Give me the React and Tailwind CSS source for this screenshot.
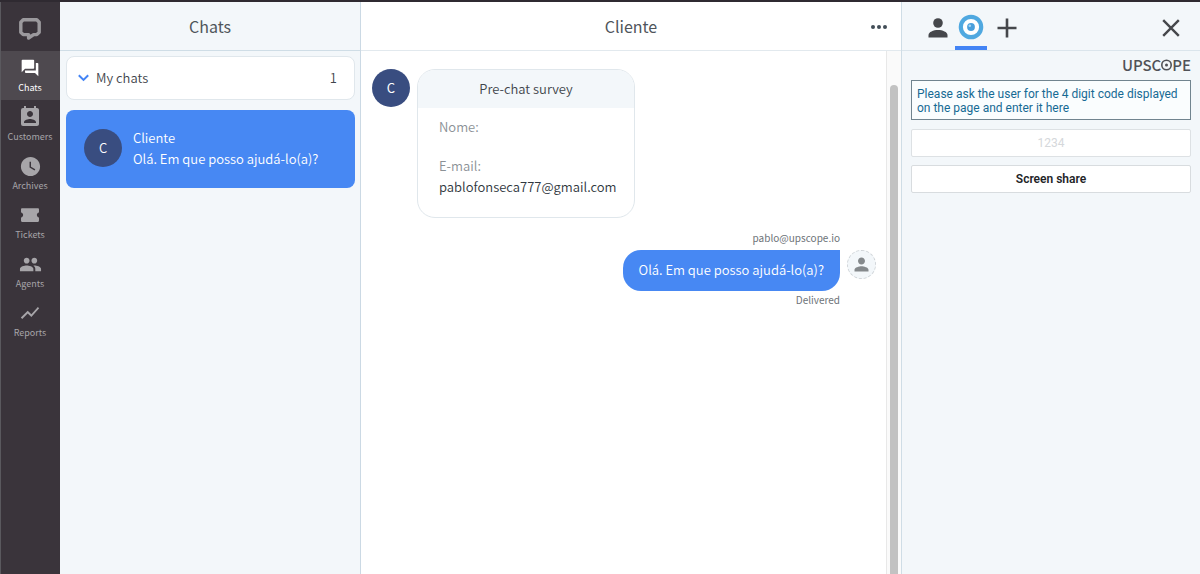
import React from "react";
import {
  MdQuestionAnswer,
  MdPermContactCalendar,
  MdWatchLater,
  MdPeople,
  MdShowChart,
  MdPerson,
} from "react-icons/md";

function LogoIcon() {
  return (
    <svg width="24" height="24" viewBox="0 0 24 24" fill="none" stroke="currentColor" strokeWidth="3.4" strokeLinejoin="round" aria-hidden="true">
      <path d="M5.2 2.800h13.600l2.400 2.400v10l-2.400 2.400h-3.200l-5 3.400v-3.400H5.200L2.800 15.200v-10z" />
    </svg>
  );
}

function TicketIcon() {
  return (
    <svg width="22" height="22" viewBox="0 0 24 24" fill="currentColor" aria-hidden="true">
      <path d="M3.400 4.500h17.200c.7 0 1.200.5 1.200 1.200v3.600c-1.500.3-2.300 1.400-2.300 2.700s.8 2.400 2.300 2.700v3.600c0 .7-.5 1.200-1.200 1.200H3.400c-.7 0-1.200-.5-1.200-1.200v-3.600c1.500-.3 2.300-1.400 2.300-2.700S3.700 9.600 2.200 9.300V5.700c0-.7.5-1.200 1.200-1.200z" />
    </svg>
  );
}

function EyeIcon() {
  return (
    <svg width="26" height="26" viewBox="0 0 26 26" aria-hidden="true">
      <circle cx="13" cy="13" r="10.200" fill="#fff" stroke="#4fa8e0" strokeWidth="4.200" />
      <circle cx="13" cy="13" r="3.900" fill="#4a9fdc" />
      <circle cx="11.800" cy="11.800" r="1.300" fill="#a9d6f3" />
    </svg>
  );
}

const navItems = [
  { label: "Chats", icon: <MdQuestionAnswer size={20} />, active: true },
  { label: "Customers", icon: <MdPermContactCalendar size={24} /> },
  { label: "Archives", icon: <MdWatchLater size={23} /> },
  { label: "Tickets", icon: <TicketIcon /> },
  { label: "Agents", icon: <MdPeople size={23} /> },
  { label: "Reports", icon: <MdShowChart size={22} /> },
];

function Avatar() {
  return (
    <div className="flex size-[38px] shrink-0 items-center justify-center rounded-full bg-[#394d80] text-[13px] text-white">
      C
    </div>
  );
}

function Sidebar() {
  return (
    <nav className="flex w-[60px] shrink-0 flex-col border-l border-[#5a595e] bg-[#3a343b] text-[#a7a5a9]">
      <a href="#home" aria-label="Home" className="flex h-[49px] items-center justify-center pt-1 pr-px text-[#9b999d]">
        <LogoIcon />
      </a>
      {navItems.map((item) => (
        <a
          key={item.label}
          href={"#" + item.label.toLowerCase()}
          className={
            item.active
              ? "flex h-[49px] flex-col items-center bg-[#4e494f] pt-[5px] pr-px text-white"
              : "flex h-[49px] flex-col items-center pt-[5px] pr-px"
          }
        >
          <span className="flex h-6 items-center justify-center">{item.icon}</span>
          <span className="text-[9px] leading-4">{item.label}</span>
        </a>
      ))}
    </nav>
  );
}

function ChatList() {
  return (
    <section className="flex w-[301px] shrink-0 flex-col border-r border-[#cbd9e4] bg-[#f3f7fa]">
      <header className="flex h-[49px] items-center justify-center border-b border-[#cfdde6] pb-px">
        <h1 className="text-base text-[#4f555b]">Chats</h1>
      </header>
      <div className="flex flex-col gap-2.5 px-[5px] py-[5px] pl-1.5">
        <button type="button" className="flex h-11 items-center rounded-lg border border-[#e0e7ec] bg-white pr-[17px] pl-[11px] text-[13px] font-[350] text-[#3f454b]">
          <svg width="11" height="8" viewBox="0 0 11 8" fill="none" stroke="#4384f5" strokeWidth="2" aria-hidden="true">
            <path d="M.8 1.200l4.700 4.700 4.700-4.700" />
          </svg>
          <span className="ml-[7px] flex-1 text-left">My chats</span>
          <span>1</span>
        </button>
        <a href="#cliente" className="flex h-[78px] items-center gap-[11px] rounded-lg bg-[#4788f3] px-[18px] pb-[3px] text-[13px] leading-[21px] font-[350] text-white">
          <Avatar />
          <span className="flex flex-col">
            <span>Cliente</span>
            <span>Olá. Em que posso ajudá-lo(a)?</span>
          </span>
        </a>
      </div>
    </section>
  );
}

function Conversation() {
  return (
    <main className="flex min-w-0 flex-1 flex-col bg-white">
      <header className="grid h-[49px] grid-cols-[45px_1fr_45px] items-center border-b border-[#e2e9ee] pb-px">
        <span />
        <h2 className="text-center text-base text-[#4f555b]">Cliente</h2>
        <button type="button" aria-label="More actions" className="flex justify-center pt-[3px] text-[#424d57]">
          <svg width="16" height="6" viewBox="0 0 16 6" fill="currentColor" aria-hidden="true">
            <circle cx="2" cy="3" r="2" />
            <circle cx="8" cy="3" r="2" />
            <circle cx="14" cy="3" r="2" />
          </svg>
        </button>
      </header>
      <div className="flex flex-1">
        <div className="flex flex-1 flex-col pt-[18px] pr-2.5 pl-[11px]">
          <div className="flex items-start gap-[7px]">
            <Avatar />
            <div className="flex h-[149px] w-[218px] flex-col overflow-hidden rounded-[18px] border border-[#e0e7ec] text-[13px] font-[350] text-[#3f454b]">
              <h3 className="bg-[#f3f7fa] py-2 text-center leading-[22px]">Pre-chat survey</h3>
              <dl className="flex flex-col gap-[18px] px-[21px] pt-2 leading-[21px]">
                <div>
                  <dt className="text-[#8b9196]">Nome:</dt>
                </div>
                <div>
                  <dt className="text-[#8b9196]">E-mail:</dt>
                  <dd className="text-[#30373e]">pablofonseca777@gmail.com</dd>
                </div>
              </dl>
            </div>
          </div>
          <div className="mt-2.5 grid grid-cols-[1fr_auto] gap-x-[7px] text-[10px] text-[#6d7378]">
            <span className="pb-0.5 text-right leading-5">pablo@upscope.io</span>
            <span />
            <p className="justify-self-end rounded-[18px] rounded-tr-none bg-[#4788f3] px-4 pt-[9px] pb-[11px] text-[13px] leading-[21px] font-[350] text-white">
              Olá. Em que posso ajudá-lo(a)?
            </p>
            <div className="flex size-[29px] items-center justify-center rounded-full border border-dashed border-[#cfd4d8] bg-[#f3f7fa] text-[#85898c]">
              <MdPerson size={21} />
            </div>
            <span className="text-right leading-[18px]">Delivered</span>
          </div>
        </div>
        <div className="flex w-[15px] flex-col items-center border-l border-[#e8e8e8] bg-[#fafafa] pt-[34px]">
          <div className="w-2 flex-1 rounded-t-full bg-[#c2c2c2]" />
        </div>
      </div>
    </main>
  );
}

function Wordmark() {
  return (
    <div className="flex items-center justify-end text-[15px] leading-5 font-medium text-[#505257]">
      <span>UPSC</span>
      <svg width="11" height="12" viewBox="0 0 11 12" role="img" aria-label="O">
        <circle cx="5.500" cy="6" r="4.700" fill="none" stroke="currentColor" strokeWidth="1.600" />
        <circle cx="5.500" cy="6" r="1.500" fill="currentColor" />
      </svg>
      <span>PE</span>
    </div>
  );
}

function DetailsPanel() {
  return (
    <aside className="flex w-[299px] shrink-0 flex-col border-l border-[#cfdde6] bg-[#f3f7fa]">
      <header className="flex h-[49px] items-stretch border-b border-[#dbe5ec] pr-5 pl-5 text-[#45474b]">
        <button type="button" aria-label="Customer details" className="flex w-8 items-center justify-center pt-1">
          <svg width="20" height="20" viewBox="0 0 20 20" fill="currentColor" aria-hidden="true">
            <circle cx="10" cy="5" r="4.800" />
            <path d="M.5 19.500v-2.500c0-3 5-5 9.500-5s9.500 2 9.500 5v2.500z" />
          </svg>
        </button>
        <button type="button" aria-label="Upscope" className="ml-px flex w-8 items-center justify-center border-b-4 border-[#4384f5] pt-1.5">
          <EyeIcon />
        </button>
        <button type="button" aria-label="Add app" className="ml-1 flex w-8 items-center justify-center pt-1">
          <svg width="20" height="20" viewBox="0 0 20 20" fill="none" stroke="currentColor" strokeWidth="2.600" aria-hidden="true">
            <path d="M10 .5v19M.5 10h19" />
          </svg>
        </button>
        <button type="button" aria-label="Close" className="ml-auto flex items-center pt-1">
          <svg width="18" height="18" viewBox="0 0 18 18" fill="none" stroke="currentColor" strokeWidth="2.400" aria-hidden="true">
            <path d="M1.200 1.200l15.600 15.600M16.800 1.200L1.200 16.800" />
          </svg>
        </button>
      </header>
      <form className="flex flex-col px-[9px] pt-1 font-[Roboto,sans-serif] text-xs">
        <div className="font-['Noto_Sans_CJK_SC',sans-serif]">
          <Wordmark />
        </div>
        <label htmlFor="code" className="mt-[5px] border border-[#71848f] bg-[#fafdfe] px-[5px] pt-1.5 pb-1 leading-[14px] text-[#166a94]">
          Please ask the user for the 4 digit code displayed on the page and enter it here
        </label>
        <input id="code" type="text" placeholder="1234" className="mt-[9px] h-7 w-full rounded-xs border border-[#dde1e4] bg-white text-center outline-none placeholder:text-[#d5d8db]" />
        <button type="button" className="mt-2 h-7 rounded-xs border border-[#d8dcdf] bg-white font-semibold text-[#222427]">
          Screen share
        </button>
      </form>
    </aside>
  );
}

export default function App() {
  return (
    <div className="flex min-h-screen border-t-2 border-[#2f2a31] font-['Noto_Sans_CJK_SC',sans-serif]">
      <Sidebar />
      <ChatList />
      <Conversation />
      <DetailsPanel />
    </div>
  );
}
